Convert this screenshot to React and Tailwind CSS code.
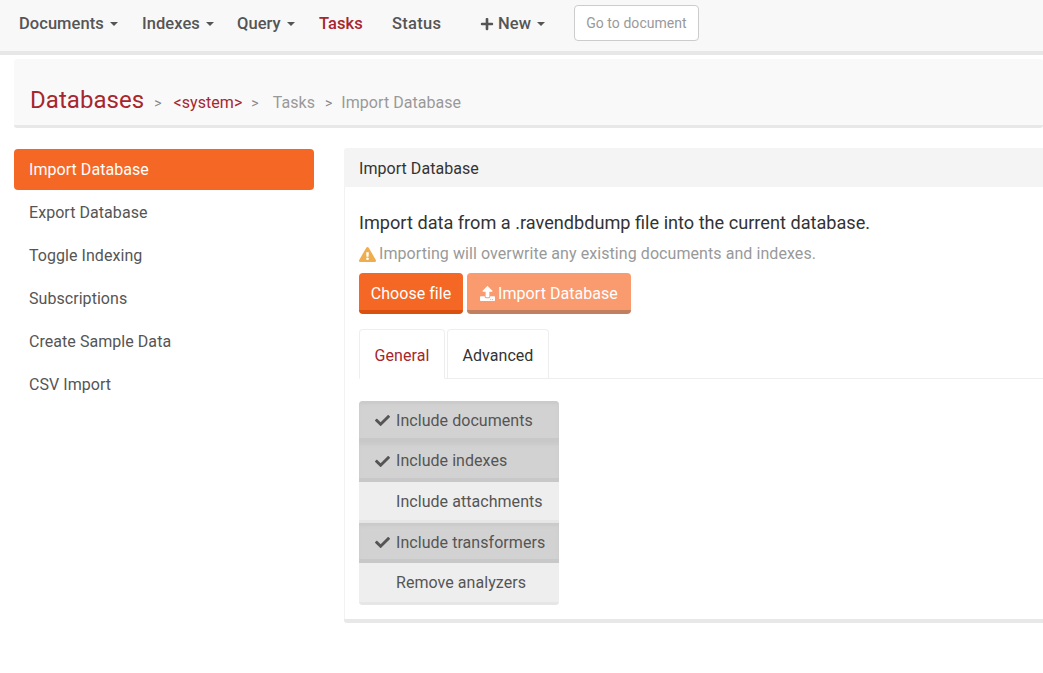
import { FaCheck, FaPlus, FaExclamationTriangle, FaUpload } from "react-icons/fa";

const sideItems = ["Import Database", "Export Database", "Toggle Indexing", "Subscriptions", "Create Sample Data", "CSV Import"];

const options = [
  { label: "Include documents", on: true },
  { label: "Include indexes", on: true },
  { label: "Include attachments", on: false },
  { label: "Include transformers", on: true },
  { label: "Remove analyzers", on: false },
];

function Caret() {
  return <span className="ml-[6px] inline-block w-0 h-0 border-x-[4px] border-x-transparent border-t-[4px] border-t-[#555555] align-middle" />;
}

function NavItem({ className = "", caret, children }) {
  return (
    <div className={`flex items-center pt-[1px] text-[16.5px] font-medium text-[#555555] ${className}`}>
      {children}
      {caret && <Caret />}
    </div>
  );
}

export default function App() {
  return (
    <div className="h-[673px] w-[1043px] overflow-hidden bg-white font-['Roboto',sans-serif] tracking-[0.05px]">
      {/* Navbar */}
      <div className="h-[55px] bg-[#f8f8f8] border-b-4 border-[#e7e7e7] flex items-start pl-[19px]">
        <div className="flex items-center h-[47px]">
          <NavItem caret className="w-[123px]">Documents</NavItem>
          <NavItem caret className="w-[95px]">Indexes</NavItem>
          <NavItem caret className="w-[82px]">Query</NavItem>
          <NavItem className="w-[73px] !text-[#a7262d]">Tasks</NavItem>
          <NavItem className="w-[88px] tracking-[0.3px]">Status</NavItem>
          <NavItem caret className="w-[94px]">
            <FaPlus className="mr-[4px] text-[14px]" />New
          </NavItem>
          <div className="h-[36px] w-[125px] mt-[-1px] bg-white border border-[#cccccc] rounded-[4px] flex items-center justify-center text-[14px] text-[#999999]">
            Go to document
          </div>
        </div>
      </div>

      {/* Breadcrumb header */}
      <div className="mt-[4px] ml-[14px] h-[69px] bg-[#f9f9f9] border-b-[3px] border-[#e8e8e8] rounded-[3px] flex items-end pb-[11px] pl-[16px]">
        <span className="text-[24px] leading-[30px] mb-[-1px] text-[#a7262d]">Databases</span>
        <span className="ml-[10px] text-[14px] text-[#888888] leading-[22px]">&gt;</span>
        <span className="ml-[12px] text-[16px] text-[#a7262d] leading-[22px]">&lt;system&gt;</span>
        <span className="ml-[9px] text-[14px] text-[#888888] leading-[22px]">&gt;</span>
        <span className="ml-[14px] text-[16px] text-[#999999] leading-[22px]">Tasks</span>
        <span className="ml-[10px] text-[14px] text-[#888888] leading-[22px]">&gt;</span>
        <span className="ml-[9px] text-[16px] text-[#999999] leading-[22px]">Import Database</span>
      </div>

      <div className="flex mt-[20px] ml-[14px]">
        {/* Sidebar */}
        <div className="w-[300px] mt-[1px] shrink-0 flex flex-col gap-[2px]">
          {sideItems.map((item, i) => (
            <div
              key={item}
              className={`h-[41px] px-[15px] flex items-center text-[16px] rounded-[4px] ${
                i === 0 ? "bg-[#f56724] text-white" : "text-[#555555]"
              }`}
            >
              {item}
            </div>
          ))}
        </div>

        {/* Panel */}
        <div className="ml-[30px] w-[760px] shrink-0 border-b-4 border-[#e8e8e8] rounded-[3px] h-[475px]">
          <div className="h-[39px] bg-[#f4f4f4] pl-[15px] pt-[2px] flex items-center text-[16px] text-[#333333] rounded-t-[3px]">Import Database</div>
          <div className="h-[432px] border-l border-[#f2f2f2] pl-[14px] pt-[24px]">
            <div className="text-[18.15px] leading-[24px] tracking-normal text-[#333333]">Import data from a .ravendbdump file into the current database.</div>
            <div className="mt-[8px] flex items-center text-[16px] leading-[22px] tracking-[0.07px] text-[#999999]">
              <FaExclamationTriangle className="text-[#f0ad4e] text-[17px] mr-[3px]" />
              Importing will overwrite any existing documents and indexes.
            </div>
            <div className="mt-[8px] flex gap-[4px]">
              <div className="h-[41px] w-[104px] pt-[4px] bg-[#f56724] border-b-[4px] border-[#d9500f] rounded-[4px] flex items-center justify-center text-[16px] text-white">
                Choose file
              </div>
              <div className="h-[41px] w-[164px] pt-[4px] bg-[#f99b6f] border-b-[4px] border-[#c0805f] rounded-[4px] flex items-center justify-center text-[16px] text-white">
                <FaUpload className="mr-[3px] text-[15px]" />
                Import Database
              </div>
            </div>

            {/* Tabs */}
            <div className="mt-[15px] flex gap-[2px] border-b border-[#eeeeee] h-[50px]">
              <div className="h-[50px] w-[86px] pt-[3px] bg-white border border-[#eeeeee] border-b-white rounded-t-[4px] flex items-center justify-center text-[16px] text-[#a7262d]">
                General
              </div>
              <div className="h-[49px] w-[102px] pt-[3px] border border-[#eeeeee] border-b-0 rounded-t-[4px] flex items-center justify-center text-[16px] text-[#333333]">
                Advanced
              </div>
            </div>

            {/* Toggle list */}
            <div className="mt-[22px] w-[200px] rounded-[4px] overflow-hidden">
              {options.map((o, i) => (
                <div
                  key={o.label}
                  className={`flex items-center pl-[16px] text-[16px] text-[#555555] ${
                    i === 4 ? "h-[41.6px] pt-[1px]" : "h-[40.6px] pt-[3px]"
                  } ${
                    o.on
                      ? "bg-[#d2d2d2] border-b-[4px] border-[#c8c8c8] shadow-[inset_0_3px_3px_#cacaca]"
                      : "bg-[#eeeeee] border-b-[3px] border-[#e6e6e6]"
                  }`}
                >
                  <span className="w-[21px] shrink-0">{o.on && <FaCheck className="text-[15px]" />}</span>
                  {o.label}
                </div>
              ))}
            </div>
          </div>
        </div>
      </div>
    </div>
  );
}
